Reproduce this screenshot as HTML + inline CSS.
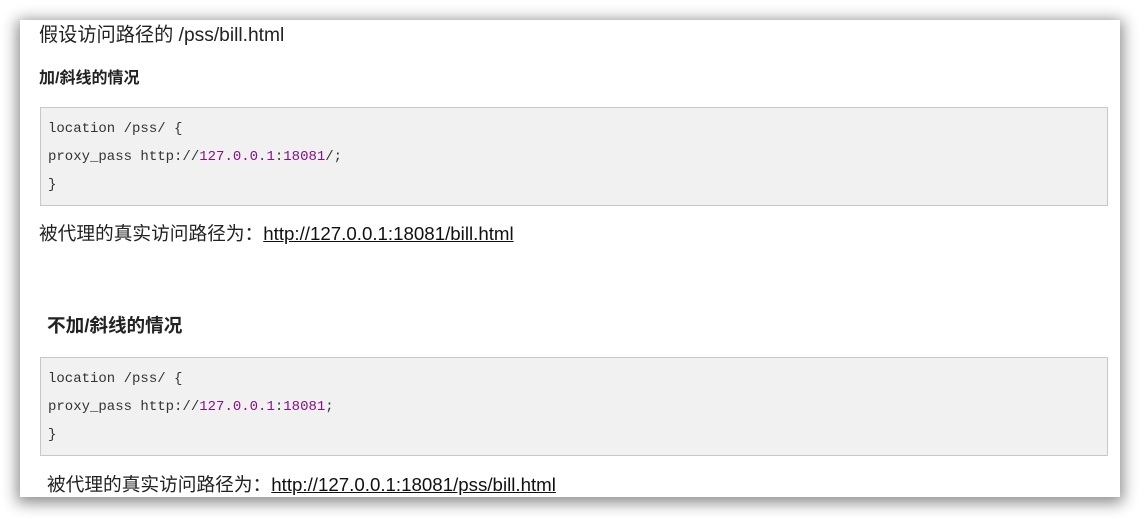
<!DOCTYPE html>
<html><head><meta charset="utf-8"><style>
body{margin:0;width:1141px;height:518px;background:#fff;overflow:hidden;position:relative;font-family:"Liberation Sans","Noto Sans CJK SC",sans-serif;color:#222}
.card{position:absolute;left:20px;top:20px;width:1100px;height:477px;background:#fff;box-shadow:0 3px 14px 3px rgba(0,0,0,.45);overflow:hidden}
.t{position:absolute;white-space:nowrap;line-height:1}
.code{position:absolute;left:20px;width:1066px;height:97px;background:#f1f1f1;border:1px solid #c8c8c8;font-family:"Liberation Mono",monospace;font-size:14px;color:#333}
.code div{position:absolute;left:7px;white-space:nowrap;line-height:1}
.n{color:#881188}
a{color:#111;text-decoration:underline}
</style></head><body>
<div class="card">
<div class="t" style="left:19px;top:6px;font-size:19.2px">假设访问路径的 /pss/bill.html</div>
<div class="t" style="left:19px;top:51px;font-size:16px;font-weight:bold">加/斜线的情况</div>
<div class="code" style="top:87px">
<div style="top:14px">location /pss/ {</div>
<div style="top:42px">proxy_pass http://<span class="n">127.0.0.1</span>:<span class="n">18081</span>/;</div>
<div style="top:70px">}</div>
</div>
<div class="t" style="left:19px;top:205px;font-size:18.7px">被代理的真实访问路径为：<a>http://127.0.0.1:18081/bill.html</a></div>
<div class="t" style="left:27px;top:297px;font-size:18.6px;font-weight:bold">不加/斜线的情况</div>
<div class="code" style="top:337px">
<div style="top:14px">location /pss/ {</div>
<div style="top:42px">proxy_pass http://<span class="n">127.0.0.1</span>:<span class="n">18081</span>;</div>
<div style="top:70px">}</div>
</div>
<div class="t" style="left:27px;top:456px;font-size:18.7px">被代理的真实访问路径为：<a>http://127.0.0.1:18081/pss/bill.html</a></div>
</div>
</body></html>
